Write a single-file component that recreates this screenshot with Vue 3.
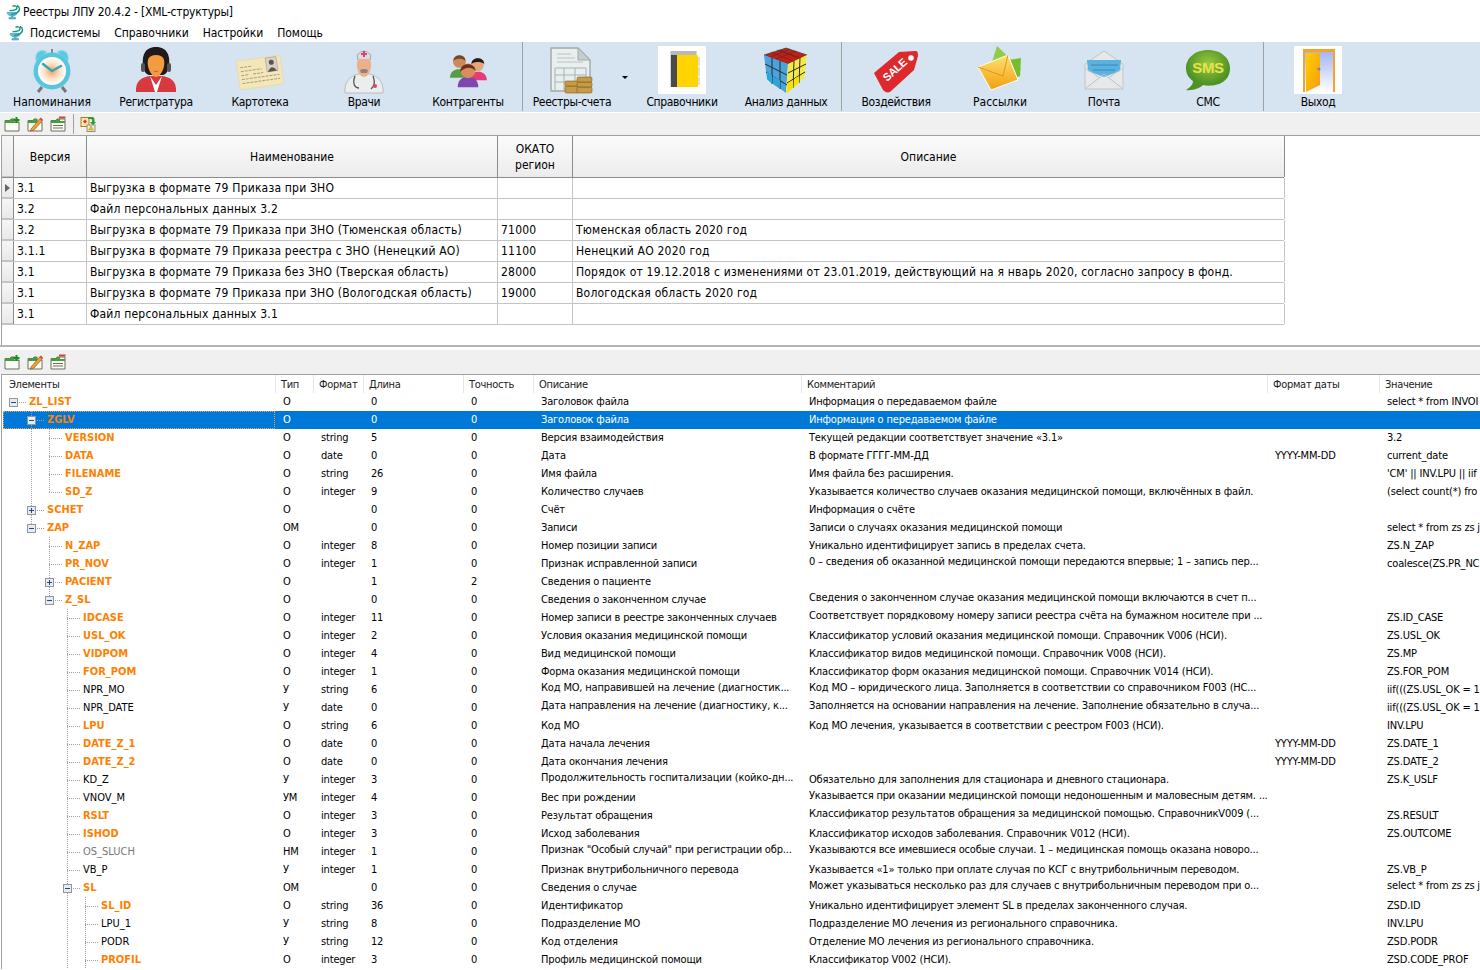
<template>
  <div class="app">
    <div class="titlebar">
      <svg class="logo" viewBox="0 0 16 16"><use href="#logo" /></svg>
      <span>Реестры ЛПУ 20.4.2 - [XML-структуры]</span>
    </div>
    <div class="menubar">
      <svg class="logo" viewBox="0 0 16 16">
        <symbol id="logo" viewBox="0 0 16 16">
          <path d="M1 8.500h10.500c-.6 2.300-2.500 3.500-4.600 3.500V13.600H9.500V15H3V13.600H5.400V12C3.200 12 1.500 10.800 1 8.500z" fill="#5fc1e2" stroke="#2b7fa8" stroke-width=".5" />
          <path d="M3.500 6.500C6 7 11 6 11 3.800 11 1.800 8 1.300 6.500 2.300M5 10.500C9 10 14 8 13.500 4.500 13.300 3 12 2 11 1.500" fill="none" stroke="#169a7c" stroke-width="1.400" />
        </symbol>
        <use href="#logo" />
      </svg>
      <span v-for="m in menu" :key="m" class="menu-item">{{ m }}</span>
    </div>

    <div class="ribbon">
      <div class="rgroup first">
        <div class="ritem wide">
          <svg class="ricon" viewBox="0 0 48 48">
            <defs>
              <radialGradient id="face"><stop offset="0" stop-color="#f3a060" /><stop offset=".55" stop-color="#fbe2c8" /><stop offset="1" stop-color="#fff" /></radialGradient>
            </defs>
            <path d="M8 15C6 6 13 2 19 6zM40 15C42 6 35 2 29 6z" fill="#5ccbe0" stroke="#9adfe9" />
            <path d="M24 3v4" stroke="#888" stroke-width="2" />
            <path d="M14 41l-4 5M34 41l4 5" stroke="#777" stroke-width="3" />
            <circle cx="24" cy="25" r="18.500" fill="#58c6dd" />
            <circle cx="24" cy="25" r="14" fill="url(#face)" />
            <path d="M24 25L15 18M24 25L33 20" stroke="#32a7b7" stroke-width="2.400" stroke-linecap="round" />
          </svg>
          <span>Напоминания</span>
        </div>
        <div class="ritem">
          <svg class="ricon" viewBox="0 0 48 48">
            <path d="M4 46C3 35 10 31 18 30H30C38 31 45 35 44 46z" fill="#d8393f" />
            <path d="M18 30L24 39 30 30 25 46H23z" fill="#fff" />
            <path d="M24 1C12 1 10 11 11 19 12 27 15 29 18 29H30C33 29 36 27 37 19 38 11 36 1 24 1z" fill="#201a18" />
            <path d="M24 9C16 9 15 14 16 20 17 26 21 31 24 31 27 31 31 26 32 20 33 14 32 9 24 9z" fill="#f49a3f" />
            <path d="M21 24.500q3 1.500 6 0-3 2.500-6 0z" fill="#a82c1f" />
            <rect x="9" y="17" width="4" height="9" rx="2" fill="#555" /><rect x="35" y="17" width="4" height="9" rx="2" fill="#555" />
          </svg>
          <span>Регистратура</span>
        </div>
        <div class="ritem">
          <svg class="ricon" viewBox="0 0 48 48">
            <g transform="rotate(-8 24 26)">
              <rect x="2" y="12" width="44" height="29" fill="#f3e6b8" stroke="#e7dcae" />
              <rect x="31" y="13" width="11" height="14" fill="#d9d2c2" stroke="#999" stroke-width=".5" />
              <circle cx="36.500" cy="18" r="2.500" fill="#555" /><path d="M32 27q4.500-8 9 0z" fill="#555" />
              <path d="M5 19h12M5 23h21M5 27h8M17 27h10M5 31h38M5 35h38" stroke="#a99f80" stroke-width="1" stroke-dasharray="3 1" />
            </g>
          </svg>
          <span>Картотека</span>
        </div>
        <div class="ritem">
          <svg class="ricon" viewBox="0 0 48 48">
            <path d="M5 47C4 36 10 30 18 28H30C38 30 44 36 43 47z" fill="#eceeee" stroke="#bbb" />
            <path d="M17 9q7-8 14 0l-1 5H18z" fill="#d9dcdc" stroke="#aaa" />
            <path d="M23 5h2v2h2v2h-2v2h-2V9h-2V7h2z" fill="#e33f6c" />
            <path d="M24 13c-6 0-8 2-7 8 1 6 4 10 7 10s6-4 7-10c1-6-1-8-7-8z" fill="#ecb08c" />
            <path d="M20 24q4-2 8 0l-1 3h-6z" fill="#8a8480" />
            <path d="M15 30C12 38 15 42 19 42M33 30C36 38 33 41 31 43" fill="none" stroke="#4f5557" stroke-width="1.300" />
            <circle cx="35" cy="40" r="2" fill="#e33f6c" />
          </svg>
          <span>Врачи</span>
        </div>
        <div class="ritem">
          <svg class="ricon" viewBox="-4 -3 56 56">
            <path d="M3 34c0-7 5-10 10-10s10 3 10 10z" fill="#5b9b46" />
            <circle cx="14" cy="15" r="7.500" fill="#c88a5a" /><path d="M7 14c0-8 14-8 14 0-4-3-10-3-14 0z" fill="#70472b" />
            <path d="M26 37c0-7 5-10 10-10s10 3 10 10z" fill="#e33d77" />
            <circle cx="35" cy="19" r="7.500" fill="#e6a679" /><path d="M28 18c0-9 15-9 15 0-4-3-11-3-15 0z" fill="#211d1b" />
            <path d="M12 45c0-9 6-12 12-12s12 3 12 12z" fill="#7f46ad" />
            <circle cx="24" cy="26" r="8.500" fill="#d88e5c" /><path d="M15 27c-1-11 17-12 18-1-5-5-12-5-18 1z" fill="#6b3218" />
          </svg>
          <span>Контрагенты</span>
        </div>
      </div>

      <div class="rgroup second">
        <div class="ritem narrow">
          <svg class="ricon" viewBox="0 0 48 48">
            <path d="M3 2H30L42 14V45H3z" fill="#e9eeee" stroke="#a2a8a8" stroke-width="1.400" stroke-linejoin="round" />
            <path d="M30 2V14H42z" fill="#c7cccc" stroke="#a2a8a8" />
            <path d="M9 8h14M9 12h18M9 16h26" stroke="#bcc2c2" />
            <path d="M7 22H38M7 29H38M7 36H28M7 22V44M16 22V44M27 22V44M38 22V32" stroke="#a5b4b4" fill="none" />
            <g fill="#c79b46" stroke="#7d5a1c" stroke-width=".6">
              <rect x="17" y="40" width="14" height="7" rx="1.500" /><rect x="17" y="35" width="14" height="5" rx="1.500" />
              <rect x="29" y="41" width="15" height="6" rx="1.500" /><rect x="29" y="36" width="15" height="5" rx="1.500" /><rect x="29" y="31" width="15" height="5" rx="1.500" />
            </g>
          </svg>
          <span>Реестры-счета</span>
        </div>
        <div class="caret"></div>
        <div class="ritem">
          <svg class="ricon" viewBox="0 0 48 48">
            <rect width="48" height="48" fill="#fff" />
            <path d="M12 5H39V41H12z" fill="#d6d6d6" />
            <rect x="13" y="9" width="6" height="32" fill="#4a4a4a" />
            <rect x="19" y="9" width="21" height="32" rx="1" fill="#ffd400" />
            <path d="M40 11h2V20h-2zM40 21h2V30h-2zM40 31h2V39h-2z" fill="#ddd" />
            <path d="M13 5H38V9H13z" fill="#b9b9b9" />
          </svg>
          <span>Справочники</span>
        </div>
        <div class="ritem">
          <svg class="ricon" viewBox="0 0 48 48">
            <path d="M2 9L24 2 45 9 26 18z" fill="#c41f14" stroke="#333" stroke-width=".6" />
            <path d="M2 9L26 18 24 47 5 33z" fill="#4aa3dd" />
            <path d="M26 18L45 9 42 32 24 47z" fill="#f3ea4a" />
            <path d="M9 6L31 15M17 4L38 12M15 4L36 12M34 5L14 13M28 3L8 11" stroke="#333" stroke-width=".5" fill="none" />
            <path d="M3 18L25 29M4 26L25 39M10 12L10 38M18 15L18 43M32 15L31 42M38 12L37 37M26 27L44 18M25 37L43 26" stroke="#2c2c20" stroke-width="1" fill="none" />
            <path d="M5 25l5 4v9l-5-5zM11 30l7 4v9l-7-5z" fill="#2ca5d8" />
            <path d="M26 37l5-3v8l-6 5zM32 33l5-3v7l-5 4z" fill="#f9e000" />
          </svg>
          <span>Анализ данных</span>
        </div>
      </div>

      <div class="rgroup third">
        <div class="ritem">
          <svg class="ricon" viewBox="0 0 48 48">
            <path d="M2 27L27 6 43 5C46 5 46 7 46 10L42 24 18 46C15 47 13 46 11 44z" fill="#dc2a2c" />
            <circle cx="39" cy="12" r="2.800" fill="#fff" />
            <text x="0" y="0" transform="translate(15 36) rotate(-42)" class="sale">SALE</text>
          </svg>
          <span>Воздействия</span>
        </div>
        <div class="ritem wide">
          <svg class="ricon" viewBox="0 0 48 48">
            <defs><linearGradient id="env" x2="0" y2="1"><stop offset="0" stop-color="#ffe070" /><stop offset="1" stop-color="#f0a010" /></linearGradient></defs>
            <path d="M16 16L21 0 45 23 42 27z" fill="#8fce42" />
            <path d="M20 16L45 12 44 30 26 38z" fill="#79bd2f" />
            <path d="M2 21L32 9 42 34 15 44z" fill="url(#env)" stroke="#fff" />
            <path d="M2 21L27 30 32 9" fill="none" stroke="#e09a10" />
          </svg>
          <span>Рассылки</span>
        </div>
        <div class="ritem">
          <svg class="ricon" viewBox="0 0 48 48">
            <path d="M5 18L24 5 43 18V43H5z" fill="#e6e8e9" stroke="#c2c5c7" />
            <path d="M7 14H41L40 25 24 31 8 25z" fill="#58b3e0" />
            <path d="M11 19H38M13 24H35" stroke="#3a86b4" />
            <path d="M5 43L24 28 43 43M5 22L20 32M43 22L28 32" fill="none" stroke="#bfc3c5" />
          </svg>
          <span>Почта</span>
        </div>
        <div class="ritem">
          <svg class="ricon" viewBox="0 0 48 48">
            <defs><radialGradient id="sms" cy=".35"><stop offset="0" stop-color="#9ccb3d" /><stop offset="1" stop-color="#4e9226" /></radialGradient></defs>
            <path d="M24 4C10 4 2 13 2 22 2 29 6 33 9 35 9 39 6 41 2 44 9 45 16 42 19 39 28 41 46 39 46 22 46 13 38 4 24 4z" fill="url(#sms)" />
            <text x="24" y="27" class="sms">SMS</text>
          </svg>
          <span>СМС</span>
        </div>
      </div>

      <div class="rgroup fourth">
        <div class="ritem">
          <svg class="ricon" viewBox="0 0 48 48">
            <defs>
              <linearGradient id="gap" x2="0" y2="1"><stop offset="0" stop-color="#a5b6f5" /><stop offset="1" stop-color="#fff" /></linearGradient>
              <linearGradient id="door" x2="1" y2="1"><stop offset="0" stop-color="#ffd000" /><stop offset="1" stop-color="#f39a10" /></linearGradient>
            </defs>
            <rect width="48" height="48" fill="#fff" />
            <rect x="9" y="3" width="32" height="43" fill="#f4a32c" />
            <rect x="11" y="6" width="28" height="40" fill="url(#gap)" />
            <path d="M12 7H26V39L12 46z" fill="url(#door)" />
            <circle cx="25" cy="23" r="1.500" fill="#6e86a8" />
          </svg>
          <span>Выход</span>
        </div>
      </div>
    </div>

    <div class="toolbar tool-top">
      <svg class="tool" viewBox="0 0 16 16">
        <symbol id="t-add" viewBox="0 0 16 16">
          <path d="M1 4.500H6L7 3H11V6H15V15H1z" fill="#fcfcf4" stroke="#6f6f62" />
          <path d="M1 4.500H6L7 3H10V6H15V7H1z" fill="#3fa13a" />
          <path d="M12.500 1v6M9.500 4h6" stroke="#218b22" stroke-width="2" />
        </symbol>
        <symbol id="t-edit" viewBox="0 0 16 16">
          <path d="M1 4.500H6L7 3H10V6H15V15H1z" fill="#fcfcf4" stroke="#6f6f62" />
          <path d="M1 4.500H6L7 3H10V6H11V7H1z" fill="#3fa13a" />
          <path d="M4 13L13 2.500 15.500 4.500 7 14 3.500 15z" fill="#f2a234" stroke="#8a5a20" stroke-width=".7" />
          <path d="M12.500 3l2.500 2 1-1.300L13.800 1.500z" fill="#d8433b" />
        </symbol>
        <symbol id="t-del" viewBox="0 0 16 16">
          <path d="M1 4.500H6L7 3H15V15H1z" fill="#fcfcf4" stroke="#6f6f62" />
          <path d="M1 4.500H6L7 3H10V5H15V7H1z" fill="#3fa13a" />
          <path d="M9 1.500h6.500" stroke="#d6403b" stroke-width="2" />
          <path d="M3 9.500H13M3 12H13" stroke="#6f6f62" />
        </symbol>
        <use href="#t-add" />
      </svg>
      <svg class="tool" viewBox="0 0 16 16"><use href="#t-edit" /></svg>
      <svg class="tool" viewBox="0 0 16 16"><use href="#t-del" /></svg>
      <div class="tool-sep"></div>
      <svg class="tool" viewBox="0 0 16 16">
        <rect x="1" y="1.500" width="8" height="9" fill="#ffe9a8" stroke="#b07a2a" />
        <path d="M5 3.500l2 2-2 2-2-2z" fill="#d6352c" />
        <path d="M8 1h4.500q2 0 2 3v2H16l-3 3.500L10 6h2V4q0-1-1.500-1H8z" fill="#2f9d2f" />
        <rect x="7" y="9" width="8" height="6.500" fill="#f1eedf" stroke="#8f8f80" />
        <path d="M11 10l2.500 4h-5z" fill="#f3c21b" stroke="#a07a10" stroke-width=".4" />
      </svg>
    </div>

    <div class="upper">
      <div class="grid-head">
        <div class="ind"></div>
        <div class="gh w-ver">Версия</div>
        <div class="gh w-name">Наименование</div>
        <div class="gh w-okato">ОКАТО<br />регион</div>
        <div class="gh w-desc">Описание</div>
      </div>
      <div v-for="(g, i) in gridRows" :key="i" class="grid-row">
        <div class="ind"><i v-if="i === 0" class="pointer"></i></div>
        <div class="gc w-ver">{{ g[0] }}</div>
        <div class="gc w-name">{{ g[1] }}</div>
        <div class="gc w-okato">{{ g[2] }}</div>
        <div class="gc w-desc">{{ g[3] }}</div>
      </div>
    </div>

    <div class="splitter"></div>

    <div class="toolbar tool-low">
      <svg class="tool" viewBox="0 0 16 16"><use href="#t-add" /></svg>
      <svg class="tool" viewBox="0 0 16 16"><use href="#t-edit" /></svg>
      <svg class="tool" viewBox="0 0 16 16"><use href="#t-del" /></svg>
    </div>

    <div class="tree">
      <div class="tree-head">
        <div v-for="h in treeHead" :key="h" class="th">{{ h }}</div>
      </div>
      <div v-for="(r, i) in treeRows" :key="r.name + i" class="tr" :class="{ selected: i === 1 }">
        <div class="td-name">
          <span v-for="(g, k) in r.guides" :key="k" class="slot" :class="g"></span>
          <span class="slot last" :class="r.join">
            <svg v-if="r.exp" class="exp" viewBox="0 0 9 9">
              <rect x=".5" y=".5" width="8" height="8" fill="#e9ecee" stroke="#8f979c" />
              <path :d="r.exp === '+' ? 'M2 4.500H7M4.500 2V7' : 'M2 4.500H7'" stroke="#27448c" />
            </svg>
          </span>
          <span class="name" :class="r.style">{{ r.name }}</span>
        </div>
        <div class="td">{{ r.type }}</div>
        <div class="td">{{ r.fmt }}</div>
        <div class="td">{{ r.len }}</div>
        <div class="td">{{ r.prec }}</div>
        <div class="td" :class="{ up: r.up.includes('d') }">{{ r.desc }}</div>
        <div class="td" :class="{ up: r.up.includes('c') }">{{ r.comment }}</div>
        <div class="td">{{ r.date }}</div>
        <div class="td" :class="{ up: r.up.includes('v') }">{{ r.val }}</div>
      </div>
    </div>
  </div>
</template>

<script setup>
const menu = ["Подсистемы", "Справочники", "Настройки", "Помощь"];

const gridRows = [
  ["3.1", "Выгрузка в формате 79 Приказа при ЗНО", "", ""],
  ["3.2", "Файл персональных данных 3.2", "", ""],
  ["3.2", "Выгрузка в формате 79 Приказа при ЗНО (Тюменская область)", "71000", "Тюменская область 2020 год"],
  ["3.1.1", "Выгрузка в формате 79 Приказа реестра с ЗНО (Ненецкий АО)", "11100", "Ненецкий АО 2020 год"],
  ["3.1", "Выгрузка в формате 79 Приказа без ЗНО (Тверская область)", "28000", "Порядок от 19.12.2018 с изменениями от 23.01.2019, действующий на я нварь 2020, согласно запросу в фонд."],
  ["3.1", "Выгрузка в формате 79 Приказа при ЗНО (Вологодская область)", "19000", "Вологодская область 2020 год"],
  ["3.1", "Файл персональных данных 3.1", "", ""],
];

const treeHead = ["Элементы", "Тип", "Формат", "Длина", "Точность", "Описание", "Комментарий", "Формат даты", "Значение"];

const iifUsl = "iif(((ZS.USL_OK = 1";

// level, name, style, expander, type, format, length, precision, description, comment, date format, value, raised cells
const raw = [
  [0, "ZL_LIST", "b", "-", "О", "", 0, 0, "Заголовок файла", "Информация о передаваемом файле", "", "select * from INVOI"],
  [1, "ZGLV", "b", "-", "О", "", 0, 0, "Заголовок файла", "Информация о передаваемом файле", "", ""],
  [2, "VERSION", "b", "", "О", "string", 5, 0, "Версия взаимодействия", "Текущей редакции соответствует значение «3.1»", "", "3.2"],
  [2, "DATA", "b", "", "О", "date", 0, 0, "Дата", "В формате ГГГГ-ММ-ДД", "YYYY-MM-DD", "current_date"],
  [2, "FILENAME", "b", "", "О", "string", 26, 0, "Имя файла", "Имя файла без расширения.", "", "'CM' || INV.LPU || iif"],
  [2, "SD_Z", "b", "", "О", "integer", 9, 0, "Количество случаев", "Указывается количество случаев оказания медицинской помощи, включённых в файл.", "", "(select count(*) fro"],
  [1, "SCHET", "b", "+", "О", "", 0, 0, "Счёт", "Информация о счёте", "", ""],
  [1, "ZAP", "b", "-", "ОМ", "", 0, 0, "Записи", "Записи о случаях оказания медицинской помощи", "", "select * from zs zs j"],
  [2, "N_ZAP", "b", "", "О", "integer", 8, 0, "Номер позиции записи", "Уникально идентифицирует запись в пределах счета.", "", "ZS.N_ZAP"],
  [2, "PR_NOV", "b", "", "О", "integer", 1, 0, "Признак исправленной записи", "0 – сведения об оказанной медицинской помощи передаются впервые; 1 – запись пер...", "", "coalesce(ZS.PR_NC", "c"],
  [2, "PACIENT", "b", "+", "О", "", 1, 2, "Сведения о пациенте", "", "", ""],
  [2, "Z_SL", "b", "-", "О", "", 0, 0, "Сведения о законченном случае", "Сведения о законченном случае оказания медицинской помощи включаются в счет п...", "", "", "c"],
  [3, "IDCASE", "b", "", "О", "integer", 11, 0, "Номер записи в реестре законченных случаев", "Соответствует порядковому номеру записи реестра счёта на бумажном носителе при ...", "", "ZS.ID_CASE", "c"],
  [3, "USL_OK", "b", "", "О", "integer", 2, 0, "Условия оказания медицинской помощи", "Классификатор условий оказания медицинской помощи. Справочник V006 (НСИ).", "", "ZS.USL_OK"],
  [3, "VIDPOM", "b", "", "О", "integer", 4, 0, "Вид медицинской помощи", "Классификатор видов медицинской помощи. Справочник V008 (НСИ).", "", "ZS.MP"],
  [3, "FOR_POM", "b", "", "О", "integer", 1, 0, "Форма оказания медицинской помощи", "Классификатор форм оказания медицинской помощи. Справочник V014 (НСИ).", "", "ZS.FOR_POM"],
  [3, "NPR_MO", "", "", "У", "string", 6, 0, "Код МО, направившей на лечение (диагностик...", "Код МО – юридического лица. Заполняется в соответствии со справочником F003 (НС...", "", iifUsl, "dc"],
  [3, "NPR_DATE", "", "", "У", "date", 0, 0, "Дата направления на лечение (диагностику, к...", "Заполняется на основании направления на лечение. Заполнение обязательно в случа...", "", iifUsl, "dc"],
  [3, "LPU", "b", "", "О", "string", 6, 0, "Код МО", "Код МО лечения, указывается в соответствии с реестром F003 (НСИ).", "", "INV.LPU"],
  [3, "DATE_Z_1", "b", "", "О", "date", 0, 0, "Дата начала лечения", "", "YYYY-MM-DD", "ZS.DATE_1"],
  [3, "DATE_Z_2", "b", "", "О", "date", 0, 0, "Дата окончания лечения", "", "YYYY-MM-DD", "ZS.DATE_2"],
  [3, "KD_Z", "", "", "У", "integer", 3, 0, "Продолжительность госпитализации (койко-дн...", "Обязательно для заполнения для стационара и дневного стационара.", "", "ZS.K_USLF", "d"],
  [3, "VNOV_M", "", "", "УМ", "integer", 4, 0, "Вес при рождении", "Указывается при оказании медицинской помощи недоношенным и маловесным детям. ...", "", "", "c"],
  [3, "RSLT", "b", "", "О", "integer", 3, 0, "Результат обращения", "Классификатор результатов обращения за медицинской помощью. СправочникV009 (...", "", "ZS.RESULT", "c"],
  [3, "ISHOD", "b", "", "О", "integer", 3, 0, "Исход заболевания", "Классификатор исходов заболевания. Справочник V012 (НСИ).", "", "ZS.OUTCOME"],
  [3, "OS_SLUCH", "g", "", "НМ", "integer", 1, 0, "Признак \"Особый случай\" при регистрации обр...", "Указываются все имевшиеся особые случаи. 1 – медицинская помощь оказана новоро...", "", "", "dc"],
  [3, "VB_P", "", "", "У", "integer", 1, 0, "Признак внутрибольничного перевода", "Указывается «1» только при оплате случая по КСГ с внутрибольничным переводом.", "", "ZS.VB_P"],
  [3, "SL", "b", "-", "ОМ", "", 0, 0, "Сведения о случае", "Может указываться несколько раз для случаев с внутрибольничным переводом при о...", "", "select * from zs zs j", "cv"],
  [4, "SL_ID", "b", "", "О", "string", 36, 0, "Идентификатор", "Уникально идентифицирует элемент SL в пределах законченного случая.", "", "ZSD.ID"],
  [4, "LPU_1", "", "", "У", "string", 8, 0, "Подразделение МО", "Подразделение МО лечения из регионального справочника.", "", "INV.LPU"],
  [4, "PODR", "", "", "У", "string", 12, 0, "Код отделения", "Отделение МО лечения из регионального справочника.", "", "ZSD.PODR"],
  [4, "PROFIL", "b", "", "О", "integer", 3, 0, "Профиль медицинской помощи", "Классификатор V002 (НСИ).", "", "ZSD.CODE_PROF"],
];

// is another row of this level still to come under the same parent?
function continues(i, level) {
  for (let j = i + 1; j < raw.length; j++) {
    if (raw[j][0] < level) return false;
    if (raw[j][0] === level) return true;
  }
  return level >= 3; // the list is cut off by the window here
}

const treeRows = raw.map((r, i) => {
  const guides = [];
  for (let k = 0; k < r[0]; k++) guides.push(continues(i, k) ? "guide" : "");
  let join = "tee";
  if (r[0] === 0) join = "root";
  else if (!continues(i, r[0])) join = "end";
  return {
    level: r[0], name: r[1], style: r[2], exp: r[3], type: r[4], fmt: r[5], len: r[6], prec: r[7],
    desc: r[8], comment: r[9], date: r[10], val: r[11], up: r[12] || "", guides, join,
  };
});
</script>

<style>
html, body { margin: 0; background: #fff; overflow: hidden; }
</style>

<style scoped>
.app {
  width: 1480px;
  height: 970px;
  overflow: hidden;
  background: #fff;
  color: #000;
  font-family: "DejaVu Sans Condensed", "DejaVu Sans", sans-serif;
  font-stretch: condensed;
  font-size: 12px;
}

.titlebar {
  height: 24px;
  display: flex;
  align-items: center;
  padding-left: 6px;
  gap: 1px;
  font-size: 12px;
  letter-spacing: -.2px;
}

.menubar {
  height: 18px;
  display: flex;
  align-items: center;
  padding-left: 9px;
  font-size: 12px;
}

.menubar .logo { margin-right: 5px; }
.menu-item { margin-right: 14px; letter-spacing: -.05px; }

.logo { width: 16px; height: 16px; flex: none; }

.ribbon {
  height: 70px;
  background: #d6e3f0;
  display: flex;
}

.rgroup {
  display: flex;
  height: 69px;
  border-right: 1px solid #a0a0a0;
  box-sizing: border-box;
}

.rgroup.first { width: 523px; }
.rgroup.second { width: 319px; }
.rgroup.third { width: 422px; padding-left: 2px; }
.rgroup.fourth { border-right: 0; padding-left: 2px; }

.ritem {
  width: 104px;
  display: flex;
  flex-direction: column;
  align-items: center;
  padding-top: 4px;
  box-sizing: border-box;
  font-size: 12px;
  white-space: nowrap;
  letter-spacing: -.35px;
}

.ritem.wide { letter-spacing: 0; }
.ritem.narrow { width: 98px; }

.ricon { width: 48px; height: 48px; flex: none; margin-bottom: 1px; }

.caret {
  width: 0;
  height: 0;
  margin: 34px 2px 0 1px;
  border-left: 3px solid transparent;
  border-right: 3px solid transparent;
  border-top: 3px solid #000;
}

.sale { font: bold 11px "Liberation Sans", sans-serif; fill: #fff; }
.sms { font: bold 15px "Liberation Sans", sans-serif; fill: #e9e24a; text-anchor: middle; }

.toolbar {
  display: flex;
  align-items: center;
  background: #f0f0f0;
  box-sizing: border-box;
  padding-left: 4px;
}

.tool-top {
  height: 23px;
  border-top: 1px solid #fff;
}

.tool-low {
  height: 24px;
  margin-top: 3px;
}

.tool { width: 16px; height: 16px; margin-right: 7px; flex: none; }
.tool-sep { width: 1px; height: 20px; background: #a0a0a0; margin-right: 6px; }

.upper {
  height: 210px;
  box-sizing: border-box;
  border-top: 1px solid #a0a0a0;
  border-left: 1px solid #a0a0a0;
  margin-left: 1px;
  letter-spacing: .2px;
}

.grid-head, .grid-row {
  display: flex;
  width: 1282px;
}

.grid-head {
  height: 41px;
  border-bottom: 1px solid #8c8c8c;
  background: linear-gradient(#fbfbfb, #ececec);
}

.grid-row {
  height: 20px;
  border-bottom: 1px solid #c4c4c4;
}

.ind {
  width: 11px;
  flex: none;
  border-right: 1px solid #8c8c8c;
  background: linear-gradient(#f6f6f6, #e8e8e8);
  display: flex;
  align-items: center;
  box-shadow: inset 0 -1px 0 #c4c4c4;
}

.pointer {
  width: 0;
  height: 0;
  margin-left: 3px;
  border-top: 4px solid transparent;
  border-bottom: 4px solid transparent;
  border-left: 5px solid #666;
}

.w-ver { width: 73px; }
.w-name { width: 411px; }
.w-okato { width: 75px; }
.w-desc { width: 712px; }

.gh, .gc { flex: none; box-sizing: border-box; border-right: 1px solid #c4c4c4; }
.gh {
  display: flex;
  align-items: center;
  justify-content: center;
  text-align: center;
  line-height: 16px;
  padding-top: 1px;
  border-right-color: #8c8c8c;
  letter-spacing: 0;
}

.gc {
  padding: 0 3px;
  line-height: 20px;
  white-space: nowrap;
  overflow: hidden;
}

.splitter {
  height: 2px;
  background: #b4b4b4;
}

.tree {
  border-top: 1px solid #a0a0a0;
  border-left: 1px solid #a0a0a0;
  margin-left: 1px;
  padding-left: 1px;
  font-size: 11px;
  letter-spacing: -.17px;
}

.tree-head, .tr {
  display: grid;
  grid-template-columns: 272px 38px 50px 100px 70px 268px 466px 112px 101px;
}

.tree-head { height: 18px; color: #222; letter-spacing: -.3px; }

.th {
  padding: 1px 0 0 5px;
  line-height: 18px;
  border-left: 1px solid #e5e5e5;
  white-space: nowrap;
  overflow: hidden;
  box-sizing: border-box;
}

.th:first-child { border-left: 0; padding-left: 6px; }

.tr { height: 18px; }

.tr.selected { background: #0078d7; color: #fff; }

.td-name {
  display: flex;
  height: 18px;
  overflow: hidden;
}

.tr.selected .td-name { outline: 1px dotted #f5a040; outline-offset: -1px; }

.td {
  padding-left: 8px;
  line-height: 18px;
  white-space: nowrap;
  overflow: hidden;
  box-sizing: border-box;
}

.td.up { line-height: 14px; }

.slot { width: 18px; height: 18px; flex: none; display: flex; align-items: center; }
.slot.last { width: 26px; }

.slot.guide, .slot.tee, .slot.end, .slot.root {
  background-repeat: no-repeat;
  background-image: repeating-linear-gradient(to bottom, #a0a0a0 0 1px, transparent 1px 2px);
  background-size: 1px 100%;
  background-position: 10px 0;
}

.slot.tee, .slot.end, .slot.root {
  background-image:
    repeating-linear-gradient(to bottom, #a0a0a0 0 1px, transparent 1px 2px),
    repeating-linear-gradient(to right, #a0a0a0 0 1px, transparent 1px 2px);
  background-size: 1px 100%, 14px 1px;
  background-position: 10px 0, 10px 9px;
}

.slot.end { background-size: 1px 9px, 14px 1px; }
.slot.root { background-size: 1px 0, 14px 1px; }

.exp { width: 9px; height: 9px; margin-left: 6px; }

.name { line-height: 18px; white-space: nowrap; letter-spacing: 0; }
.name.b { font-weight: 700; color: #ff8000; }
.name.g { color: #777; }
</style>
